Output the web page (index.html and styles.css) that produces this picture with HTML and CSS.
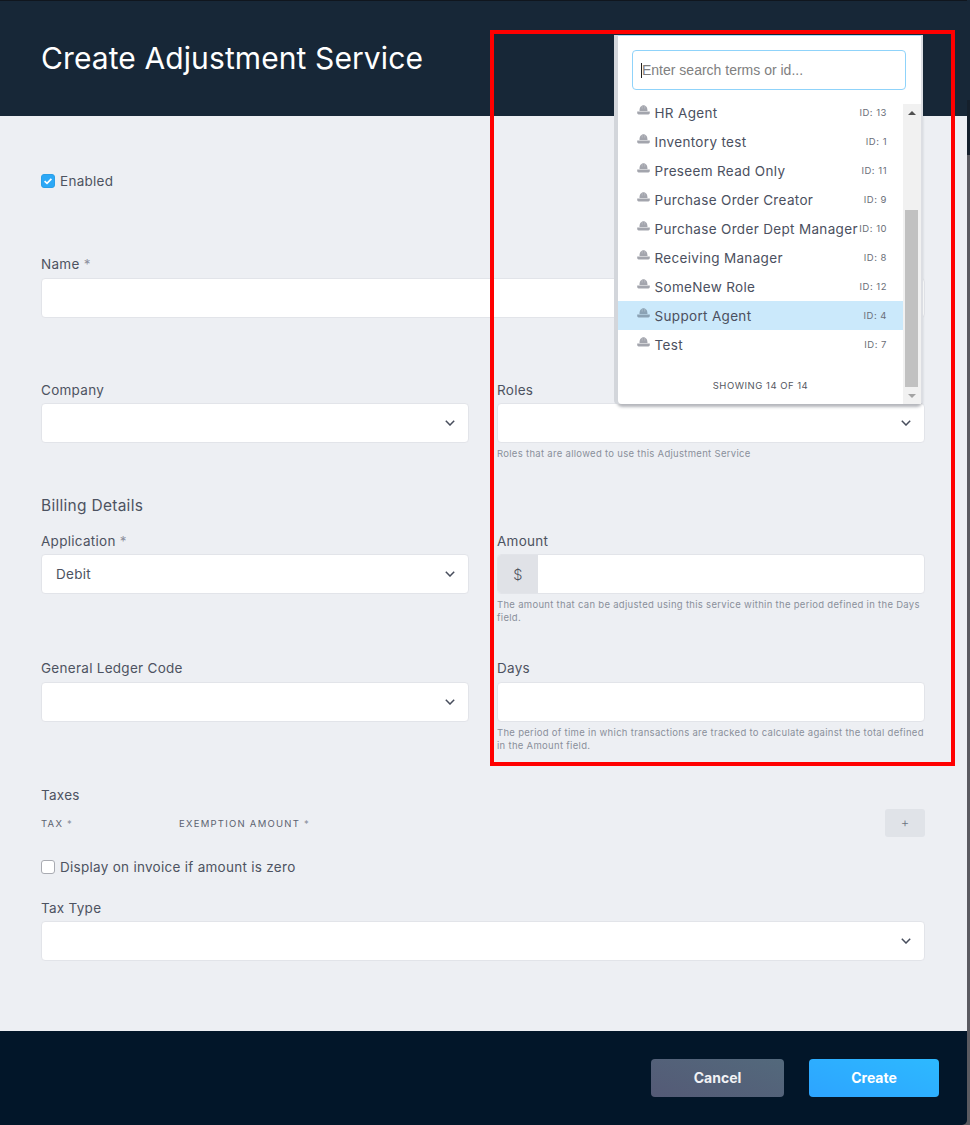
FILE: index.html
```html
<!DOCTYPE html>
<html lang="en">
<head>
<meta charset="utf-8">
<title>Create Adjustment Service</title>
<link rel="stylesheet" href="styles.css">
</head>
<body>
<svg class="defs" width="0" height="0" aria-hidden="true">
  <symbol id="chev" viewBox="0 0 10 6"><path d="M.8.8 5 5 9.2.8" fill="none" stroke="#474d5c" stroke-width="1.5"/></symbol>
  <symbol id="hat" viewBox="0 0 13 10"><path d="M2.5 6C2.5 2.5 4 .3 6.5.3S10.5 2.5 10.5 6ZM.2 6.6h12.6V8q0 1.4-1.4 1.4H1.6Q.2 9.4.2 8Z" fill="currentColor"/><path d="M5.2.6v3M7.8.6v3" stroke="#fff" stroke-opacity=".4" stroke-width=".6"/></symbol>
</svg>
<div class="modal">
  <header class="head"><h1 class="title">Create Adjustment Service</h1></header>
  <main class="form">
    <label class="check first"><span class="box on"><svg viewBox="0 0 14 14" width="14" height="14"><path d="M3.6 7.2 6 9.4l4.4-4.6" fill="none" stroke="#fff" stroke-width="1.7"/></svg></span>Enabled</label>

    <div class="field name-field">
      <div class="label">Name <span class="req">*</span></div>
      <div class="control"></div>
    </div>

    <div class="cols company-row">
      <div class="field">
        <div class="label">Company</div>
        <div class="control select"><svg class="chev"><use href="#chev"/></svg></div>
      </div>
      <div class="field">
        <div class="label">Roles</div>
        <div class="control select"><svg class="chev"><use href="#chev"/></svg></div>
        <p class="hint">Roles that are allowed to use this Adjustment Service</p>
      </div>
    </div>

    <h2 class="section billing">Billing Details</h2>

    <div class="cols app-row">
      <div class="field">
        <div class="label">Application <span class="req">*</span></div>
        <div class="control select"><span class="value">Debit</span><svg class="chev"><use href="#chev"/></svg></div>
      </div>
      <div class="field">
        <div class="label">Amount</div>
        <div class="control money"><span class="addon">$</span></div>
        <p class="hint">The amount that can be adjusted using this service within the period defined in the Days field.</p>
      </div>
    </div>

    <div class="cols gl-row">
      <div class="field">
        <div class="label">General Ledger Code</div>
        <div class="control select"><svg class="chev"><use href="#chev"/></svg></div>
      </div>
      <div class="field">
        <div class="label">Days</div>
        <div class="control"></div>
        <p class="hint">The period of time in which transactions are tracked to calculate against the total defined in the Amount field.</p>
      </div>
    </div>

    <h2 class="section taxes">Taxes</h2>
    <div class="tax-head">
      <span class="tax-col tax-a">Tax <span class="req">*</span></span>
      <span class="tax-col">Exemption Amount <span class="req">*</span></span>
      <button class="plus" type="button">+</button>
    </div>

    <label class="check zero"><span class="box"></span>Display on invoice if amount is zero</label>

    <div class="field type-field">
      <div class="label">Tax Type</div>
      <div class="control select"><svg class="chev"><use href="#chev"/></svg></div>
    </div>
  </main>
  <footer class="foot">
    <button class="btn cancel" type="button">Cancel</button>
    <button class="btn create" type="button">Create</button>
  </footer>
</div>

<div class="panel">
  <div class="search-wrap"><div class="search"><span class="caret"></span>Enter search terms or id...</div></div>
  <div class="results">
    <div class="list">
      <div class="row lead"><svg class="hat"><use href="#hat"/></svg><span class="rname">HR Agent</span><span class="rid">ID: 13</span></div>
      <div class="row"><svg class="hat"><use href="#hat"/></svg><span class="rname">Inventory test</span><span class="rid">ID: 1</span></div>
      <div class="row"><svg class="hat"><use href="#hat"/></svg><span class="rname">Preseem Read Only</span><span class="rid">ID: 11</span></div>
      <div class="row"><svg class="hat"><use href="#hat"/></svg><span class="rname">Purchase Order Creator</span><span class="rid">ID: 9</span></div>
      <div class="row"><svg class="hat"><use href="#hat"/></svg><span class="rname">Purchase Order Dept Manager</span><span class="rid">ID: 10</span></div>
      <div class="row"><svg class="hat"><use href="#hat"/></svg><span class="rname">Receiving Manager</span><span class="rid">ID: 8</span></div>
      <div class="row"><svg class="hat"><use href="#hat"/></svg><span class="rname">SomeNew Role</span><span class="rid">ID: 12</span></div>
      <div class="row active"><svg class="hat"><use href="#hat"/></svg><span class="rname">Support Agent</span><span class="rid">ID: 4</span></div>
      <div class="row"><svg class="hat"><use href="#hat"/></svg><span class="rname">Test</span><span class="rid">ID: 7</span></div>
      <div class="showing">Showing 14 of 14</div>
    </div>
    <div class="scrollbar">
      <span class="arrow up"></span>
      <div class="track"><div class="thumb"></div></div>
      <span class="arrow down"></span>
    </div>
  </div>
</div>

<div class="annotation"></div>
</body>
</html>
```

FILE: styles.css
```css
* { box-sizing: border-box; }
html, body { margin: 0; height: 100%; }
body {
  background: linear-gradient(#172737 0, #172737 100px, #15202c 100px, #15202c 155px, #5a5a60 155px);
  font-family: Inter, "Liberation Sans", sans-serif;
  color: #4d5361;
  overflow: hidden;
  position: relative;
}
.defs { position: absolute; }
.modal {
  width: 967px;
  height: 1125px;
  display: flex;
  flex-direction: column;
  border-bottom-right-radius: 5px;
  overflow: hidden;
}
.head {
  height: 116px;
  flex: none;
  background: #172737;
  border-top: 1px solid #10161e;
  padding: 0 41px 2px;
  display: flex;
  align-items: center;
}
.title {
  margin: 0;
  font-size: 30px;
  font-weight: 400;
  color: #fff;
  letter-spacing: .1px;
}
.form {
  flex: 1;
  background: #edeff3;
  padding: 55px 42px 0 41px;
  display: flex;
  flex-direction: column;
  font-size: 13.5px;
  letter-spacing: .28px;
}
.check {
  display: flex;
  align-items: center;
  gap: 5px;
  height: 20px;
}
.box {
  width: 14px;
  height: 14px;
  flex: none;
  border-radius: 3px;
  background: #fff;
  border: 1px solid #a9abb2;
  display: block;
  position: relative;
}
.box.on { background: #2ca8f6; border-color: #2a9fe8; }
.box.on svg { display: block; margin: -1px; }
.label { height: 20px; line-height: 20px; margin-bottom: 3px; }
.name-field .label, .gl-row .label { margin-bottom: 4px; }
.req { color: #8d919e; }
.control {
  height: 40px;
  background: #fff;
  border: 1px solid #e2e4e9;
  border-radius: 4px;
  display: flex;
  align-items: center;
  position: relative;
}
.select { padding: 0 13px 0 14px; justify-content: space-between; }
.chev { width: 10px; height: 6px; margin-left: auto; flex: none; }
.money { overflow: hidden; }
.addon {
  width: 40px;
  height: 100%;
  background: #e0e2e7;
  display: flex;
  align-items: center;
  justify-content: center;
  font-size: 14.5px;
  font-weight: 300;
}
.hint {
  margin: 4px 0 0;
  font-size: 9.5px;
  line-height: 13px;
  letter-spacing: .3px;
  color: #8a8f9b;
}
.cols { display: grid; grid-template-columns: 428px 428px; column-gap: 28px; }
.name-field { margin-top: 63px; }
.company-row { margin-top: 62px; }
.section { margin: 0; font-weight: 400; }
.billing { font-size: 15.5px; line-height: 22px; margin-top: 35px; }
.app-row { margin-top: 14px; }
.gl-row { margin-top: 34px; }
.taxes { font-size: 13.5px; line-height: 20px; margin-top: 33px; }
.tax-head {
  margin-top: 4px;
  height: 28px;
  display: flex;
  align-items: center;
  font-size: 9.5px;
  letter-spacing: 1.25px;
  text-transform: uppercase;
  color: #5c6270;
}
.tax-a { width: 138px; }
.plus {
  margin-left: auto;
  width: 40px;
  height: 28px;
  border: 0;
  border-radius: 3px;
  background: #e0e3e8;
  color: #6c7280;
  font: 300 13px Inter, sans-serif;
  padding: 0 0 2px;
}
.zero { margin-top: 20px; }
.type-field { margin-top: 21px; }
.foot {
  height: 94px;
  flex: none;
  background: #021629;
  display: flex;
  align-items: center;
  justify-content: flex-end;
  gap: 25px;
  padding: 0 28px 0 0;
}
.btn {
  height: 38px;
  border: 0;
  border-radius: 4px;
  color: #fff;
  font: 700 14px Inter, sans-serif;
  padding: 0 0 2px;
}
.cancel { width: 133px; background: linear-gradient(20deg, #545a76, #53697c); color: #f1f2f5; }
.create { width: 130px; background: linear-gradient(20deg, #2da4ff, #2db9ff); }

/* dropdown overlay */
.panel {
  position: absolute;
  left: 618px;
  top: 35px;
  width: 303px;
  height: 369px;
  background: #fff;
  border-top: 1px solid #a8dcfb;
  border-radius: 0 0 4px 4px;
  box-shadow: -4px 0 0 #d3d6db, 2px 0 0 #dcdee3, 0 2px 3px 1px rgba(40, 45, 60, .35);
  display: flex;
  flex-direction: column;
}
.search-wrap { padding: 14px 15px 0 14px; height: 68px; flex: none; }
.search {
  height: 40px;
  border: 1px solid #8fd3fa;
  border-radius: 4px;
  display: flex;
  align-items: center;
  padding-left: 8px;
  font-family: "Liberation Sans", sans-serif;
  font-size: 14px;
  color: #808080;
}
.caret { width: 1px; height: 15px; background: #222; flex: none; }
.results { flex: 1; display: flex; min-height: 0; }
.list { width: 285px; overflow: hidden; flex: none; }
.row {
  height: 29px;
  display: flex;
  align-items: center;
  padding: 0 16px 0 19px;
  font-size: 13.5px;
  letter-spacing: .33px;
  color: #4b5060;
  white-space: nowrap;
}
.row.lead { margin-top: -6px; }
.row.active { background: #cbe9fb; }
.hat { width: 13px; height: 10px; color: #a3a5ad; flex: none; margin-right: 4.5px; margin-top: -5px; }
.active .hat { color: #8ba2b4; }
.rname { flex: 1; min-width: 0; }
.rid { font-size: 9.5px; letter-spacing: .5px; color: #6a6e78; flex: none; }
.showing {
  margin-top: 14px;
  line-height: 26px;
  text-align: center;
  text-transform: uppercase;
  font-size: 9.5px;
  letter-spacing: .5px;
  color: #54585f;
}
.scrollbar {
  width: 18px;
  background: #f1f1f1;
  display: flex;
  flex-direction: column;
  align-items: center;
}
.arrow { width: 0; height: 0; border-left: 4px solid transparent; border-right: 4px solid transparent; flex: none; margin-right: 1px; }
.up { border-bottom: 4px solid #505050; margin-top: 7px; margin-bottom: 6px; }
.down { border-top: 4px solid #a3a3a3; margin-top: 7px; margin-bottom: 6px; }
.track { flex: 1; width: 100%; padding: 89px 3px 0 2px; display: flex; }
.thumb { width: 13px; background: #c1c1c1; flex: none; }

.annotation {
  position: absolute;
  left: 490px;
  top: 30px;
  width: 465px;
  height: 736px;
  border: 4px solid #f00;
  pointer-events: none;
}
```
